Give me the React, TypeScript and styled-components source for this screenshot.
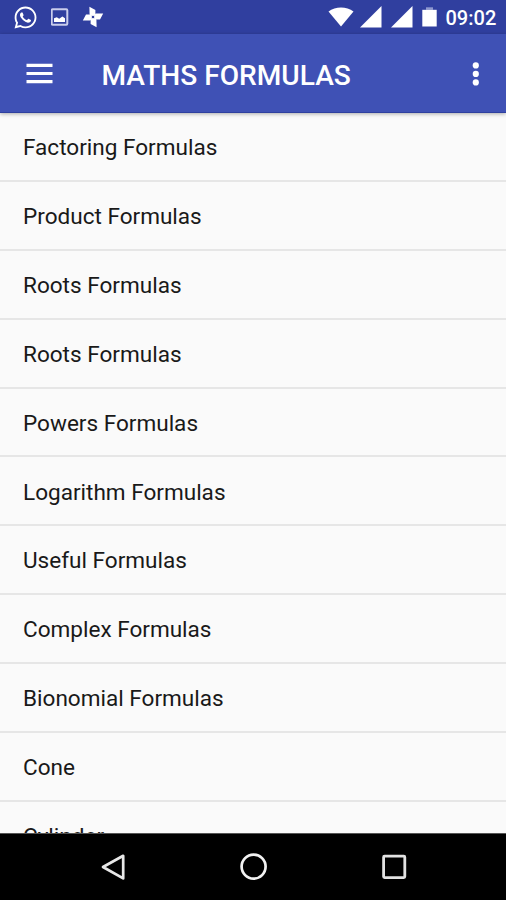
import React from "react";
import styled, { createGlobalStyle } from "styled-components";
import { FaWhatsapp } from "react-icons/fa";

const GlobalStyle = createGlobalStyle`
  body {
    margin: 0;
    background: #000;
    font-family: Roboto, "Liberation Sans", sans-serif;
  }
`;

const Screen = styled.div`
  display: flex;
  flex-direction: column;
  width: 506px;
  height: 900px;
  overflow: hidden;
  background: #fafafa;
`;

const StatusBar = styled.header`
  display: flex;
  align-items: center;
  justify-content: space-between;
  flex: none;
  height: 34px;
  padding: 0 9.5px 0 13px;
  box-sizing: border-box;
  background: #303f9f;
  color: #fff;
`;

const StatusGroup = styled.div<{ $gap: number }>`
  display: flex;
  align-items: center;
  gap: ${({ $gap }) => $gap}px;
  height: 34px;

  svg {
    display: block;
    flex: none;
  }
`;

const WifiSlot = styled.span`
  margin-right: -3.5px;
`;

const Clock = styled.time`
  width: 51px;
  font-size: 20px;
  font-weight: 500;
  line-height: 34px;
  white-space: nowrap;
  padding-top: 2px;
`;

const AppBar = styled.div`
  display: flex;
  align-items: center;
  flex: none;
  height: 79px;
  padding: 0 24px 0 26px;
  box-sizing: border-box;
  background: #3f51b5;
  border-bottom: 1px solid #2f409f;
  box-shadow: 0 1px 4px rgba(0, 0, 0, 0.32);
  z-index: 1;
`;

const IconButton = styled.button`
  display: flex;
  padding: 0;
  border: 0;
  background: none;
  color: #fff;
`;

const Title = styled.h1`
  flex: 1;
  margin: 5px 0 0 48.5px;
  color: #fff;
  font-size: 28.1px;
  font-weight: 500;
  line-height: 36px;
  white-space: nowrap;
`;

const List = styled.ul`
  flex: 1;
  min-height: 0;
  margin: 0;
  padding: 0;
  overflow: hidden;
  list-style: none;
`;

const Row = styled.li`
  display: flex;
  align-items: center;
  height: 68.9px;
  padding: 2.3px 23px 0;
  box-sizing: border-box;
  border-bottom: 2px solid #e6e6e6;
  color: #191919;
  font-size: 22.55px;
  white-space: nowrap;
`;

const NavBar = styled.nav`
  display: flex;
  align-items: center;
  justify-content: space-between;
  flex: none;
  height: 67px;
  padding: 0 97px 0 98px;
  box-sizing: border-box;
  background: #000;
  border-top: 1px solid #555;
`;

const formulas = [
  "Factoring Formulas",
  "Product Formulas",
  "Roots Formulas",
  "Roots Formulas",
  "Powers Formulas",
  "Logarithm Formulas",
  "Useful Formulas",
  "Complex Formulas",
  "Bionomial Formulas",
  "Cone",
  "Cylinder",
];

const PictureIcon = () => (
  <svg width="18" height="18" viewBox="0 0 18 18">
    <rect x="0.7" y="1.2" width="15.6" height="15.6" rx="1" fill="none" stroke="#c9cdec" strokeWidth="2" />
    <path d="M3 14V10.2l2.8-.9 2.4 1.5 3.2-2.3 2.6 1.8V14z" fill="#fff" />
  </svg>
);

const PinwheelIcon = () => (
  <svg width="22" height="22" viewBox="-12 -11 22 22" fill="#fff" overflow="visible">
    {[0, 90, 180, 270].map((angle) => (
      <path key={angle} transform={`rotate(${angle})`} d="M-3.6 -10.2L2.4 -7V-2.6L0 0L-3.4 -2.6Z" />
    ))}
    <circle r="1.3" fill="#303f9f" />
  </svg>
);

const WifiIcon = () => (
  <svg width="26" height="20" viewBox="0 0 26 20">
    <path d="M0.5 4.6C7.5-1 18.5-1 25.5 4.6L13 19.6z" fill="#fff" />
  </svg>
);

const SignalIcon = () => (
  <svg width="22" height="22" viewBox="0 0 22 22">
    <path d="M0 21.5L21.5 0V21.5z" fill="#fff" />
  </svg>
);

const BatteryIcon = () => (
  <svg width="15" height="20" viewBox="0 0 15 20">
    <path d="M4 0.3h7v2.5H4z" fill="#8f98cf" />
    <path d="M0.3 2.8h14.4v16.7H0.3z" fill="#fff" />
  </svg>
);

const MenuIcon = () => (
  <svg width="27" height="21" viewBox="0 0 27 21" fill="#fff">
    <path d="M0.5 0.8h26v3.1h-26zM0.5 9h26v3.1h-26zM0.5 17.1h26v3.1h-26z" />
  </svg>
);

const MoreIcon = () => (
  <svg width="12" height="25" viewBox="0 0 12 25" fill="#fff">
    <circle cx="5.8" cy="4.4" r="3.1" />
    <circle cx="5.8" cy="12.9" r="3.1" />
    <circle cx="5.8" cy="21.4" r="3.1" />
  </svg>
);

const BackIcon = () => (
  <svg width="30" height="30" viewBox="0 0 30 30">
    <path d="M5 15L25.2 3.8V26.4z" fill="none" stroke="#e8e8e8" strokeWidth="2.7" strokeLinejoin="round" />
  </svg>
);

const HomeIcon = () => (
  <svg width="30" height="30" viewBox="0 0 30 30">
    <circle cx="14.6" cy="14.6" r="12" fill="none" stroke="#f2f2f2" strokeWidth="2.7" />
  </svg>
);

const RecentsIcon = () => (
  <svg width="30" height="30" viewBox="0 0 30 30">
    <rect x="4.6" y="4.2" width="21.2" height="21.4" rx="1" fill="none" stroke="#e2e2e2" strokeWidth="2.8" />
  </svg>
);

export default function App() {
  return (
    <>
      <GlobalStyle />
      <Screen>
        <StatusBar>
          <StatusGroup $gap={12.5}>
            <FaWhatsapp size={25} />
            <PictureIcon />
            <PinwheelIcon />
          </StatusGroup>
          <StatusGroup $gap={9}>
            <WifiSlot>
              <WifiIcon />
            </WifiSlot>
            <SignalIcon />
            <SignalIcon />
            <BatteryIcon />
            <Clock>09:02</Clock>
          </StatusGroup>
        </StatusBar>
        <AppBar>
          <IconButton aria-label="Menu">
            <MenuIcon />
          </IconButton>
          <Title>MATHS FORMULAS</Title>
          <IconButton aria-label="More options">
            <MoreIcon />
          </IconButton>
        </AppBar>
        <List>
          {formulas.map((name, index) => (
            <Row key={index}>{name}</Row>
          ))}
        </List>
        <NavBar>
          <IconButton aria-label="Back">
            <BackIcon />
          </IconButton>
          <IconButton aria-label="Home">
            <HomeIcon />
          </IconButton>
          <IconButton aria-label="Recent apps">
            <RecentsIcon />
          </IconButton>
        </NavBar>
      </Screen>
    </>
  );
}
